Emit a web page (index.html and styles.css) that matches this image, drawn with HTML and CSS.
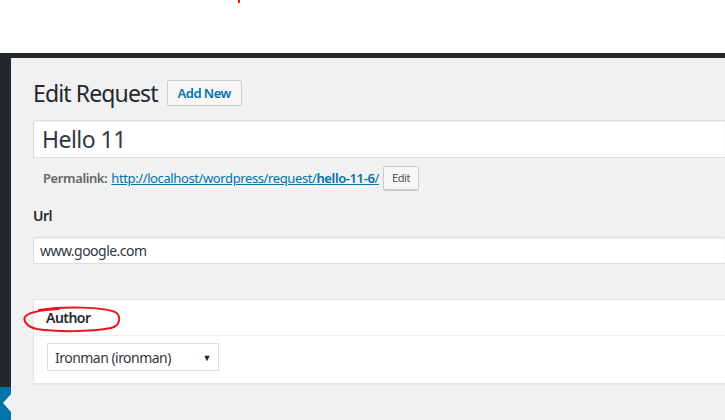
FILE: index.html
```html
<!DOCTYPE html>
<html lang="en">
<head>
<meta charset="utf-8">
<title>Edit Request</title>
<link rel="stylesheet" href="styles.css">
</head>
<body>
<div class="topstrip"><span class="dot"></span></div>
<div class="admin">
  <aside class="sidebar">
    <div class="sidebar-fill"></div>
    <div class="collapse"><span class="collapse-arrow"></span></div>
  </aside>
  <main class="content">
    <div class="heading">
      <h1 class="title">Edit Request</h1>
      <a class="btn add-new">Add New</a>
    </div>
    <div class="title-field">Hello 11</div>
    <div class="permalink">
      <span class="permalink-label">Permalink:</span>
      <a class="permalink-url">http://localhost/wordpress/request/<b>hello-11-6</b>/</a>
      <a class="btn btn-small">Edit</a>
    </div>
    <div class="field-label">Url</div>
    <div class="text-field">www.google.com</div>
    <section class="postbox">
      <h2 class="postbox-head">Author</h2>
      <div class="postbox-body">
        <div class="select"><span>Ironman (ironman)</span><span class="caret">▼</span></div>
      </div>
      <svg class="circle-mark" width="100" height="28" viewBox="0 0 100 28">
        <path d="M16 4 C42 0 80 1 92 6 C99 10 97 20 88 22 C68 26 32 26 14 23 C4 21 0 15 2 11 C5 6 18 4 36 3" fill="none" stroke="#e8141c" stroke-width="2" stroke-linecap="round"/>
      </svg>
    </section>
  </main>
</div>
</body>
</html>
```
FILE: styles.css
```css
* { box-sizing: border-box; }

html, body {
  margin: 0;
  height: 100%;
  overflow: hidden;
}

body {
  font-family: "Noto Sans", "Open Sans", sans-serif;
  letter-spacing: -0.033em;
  color: #444;
  background: #fff;
  display: flex;
  flex-direction: column;
}

.topstrip {
  height: 53px;
  flex: none;
  position: relative;
}

.dot {
  position: absolute;
  left: 238px;
  top: 0;
  width: 2px;
  height: 3px;
  background: #e8141c;
}

.admin {
  flex: 1;
  display: flex;
  border-top: 5px solid #23282d;
  background: #f1f1f1;
  min-height: 0;
}

.sidebar {
  width: 11px;
  flex: none;
  display: flex;
  flex-direction: column;
  background: #23282d;
}

.sidebar-fill { flex: 1; }

.collapse {
  height: 33px;
  background: #0073aa;
  position: relative;
}

.collapse-arrow {
  position: absolute;
  left: 3px;
  top: 7px;
  width: 0;
  height: 0;
  border-top: 9px solid transparent;
  border-bottom: 9px solid transparent;
  border-right: 8px solid #f1f1f1;
}

.content {
  flex: 1;
  padding: 21px 0 0 22px;
  min-width: 0;
}

.heading {
  display: flex;
  align-items: center;
  gap: 9px;
  height: 28px;
}

.title {
  margin: 0;
  font-size: 23px;
  font-weight: 400;
  letter-spacing: -0.038em;
  color: #23282d;
  line-height: 28px;
}

.btn {
  display: inline-block;
  border: 1px solid #ccc;
  border-radius: 2px;
  background: #f7f7f7;
  box-shadow: 0 1px 0 #ccc;
}

.add-new {
  height: 26px;
  padding: 0 10px;
  font-size: 13px;
  line-height: 24px;
  font-weight: 600;
  color: #0073aa;
  box-shadow: none;
}

.title-field {
  margin-top: 13px;
  height: 38px;
  background: #fff;
  border: 1px solid #ddd;
  border-right: none;
  box-shadow: inset 0 1px 2px rgba(0,0,0,.07);
  padding: 0 8px;
  font-size: 23px;
  line-height: 36px;
  color: #32373c;
}

.permalink {
  display: flex;
  align-items: center;
  gap: 4px;
  margin: 8px 0 0 10px;
  height: 24px;
  font-size: 13px;
  letter-spacing: -0.03em;
}

.permalink-label {
  font-weight: 600;
  color: #666;
}

.permalink-url {
  color: #0073aa;
  text-decoration: underline;
}

.permalink-url b { font-weight: 600; }

.btn-small {
  height: 24px;
  padding: 0 8px;
  font-size: 11px;
  line-height: 22px;
  color: #555;
}

.field-label {
  margin-top: 16px;
  font-size: 14px;
  font-weight: 600;
  color: #23282d;
  line-height: 20px;
}

.text-field {
  margin-top: 11px;
  height: 27px;
  background: #fff;
  border: 1px solid #ddd;
  border-right: none;
  box-shadow: inset 0 1px 2px rgba(0,0,0,.07);
  padding: 0 6px;
  font-size: 14px;
  line-height: 25px;
  color: #32373c;
}

.postbox {
  position: relative;
  margin-top: 35px;
  background: #fff;
  border: 1px solid #e5e5e5;
  border-right: none;
  box-shadow: 0 1px 1px rgba(0,0,0,.04);
}

.postbox-head {
  margin: 0;
  height: 36px;
  padding: 0 12px;
  border-bottom: 1px solid #eee;
  font-size: 14px;
  font-weight: 600;
  line-height: 36px;
  color: #23282d;
}

.postbox-body {
  padding: 7px 13px 12px;
}

.select {
  width: 172px;
  height: 28px;
  display: flex;
  align-items: center;
  justify-content: space-between;
  padding: 0 7px;
  border: 1px solid #ddd;
  font-size: 14px;
  color: #32373c;
}

.caret {
  font-size: 9px;
  color: #222;
}

.circle-mark {
  position: absolute;
  left: -11px;
  top: 6px;
}
```
